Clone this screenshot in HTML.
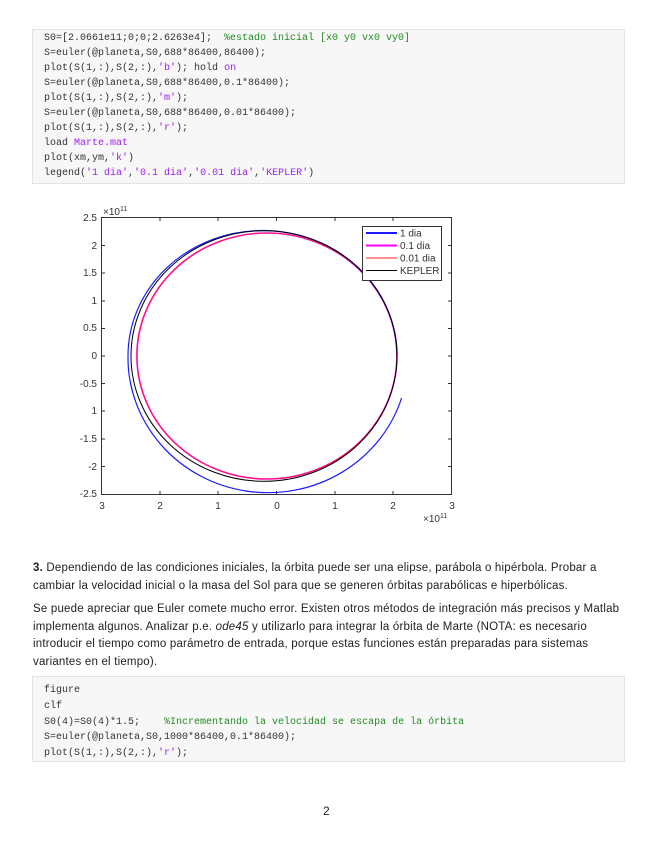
<!DOCTYPE html>
<html><head><meta charset="utf-8"><style>
body{margin:0;width:655px;height:848px;background:#fff;position:relative;overflow:hidden;font-family:"Liberation Sans",sans-serif;color:#222}
.code{position:absolute;left:32px;width:593px;background:#f7f7f7;border:1px solid #e3e3e3;font-family:"Liberation Mono",monospace;font-size:10px;line-height:15px;color:#333;white-space:pre;box-sizing:border-box;padding-left:11px}
.s{color:#a020f0}.c{color:#228b22}
.p{position:absolute;left:33px;width:620px;font-size:11.5px;line-height:17.5px;letter-spacing:0.2px;white-space:nowrap}
</style></head><body>
<div class="code" style="top:29px;height:155px;padding-top:1px">S0=[2.0661e11;0;0;2.6263e4];  <span class="c">%estado inicial [x0 y0 vx0 vy0]</span>
S=euler(@planeta,S0,688*86400,86400);
plot(S(1,:),S(2,:),<span class="s">'b'</span>); hold <span class="s">on</span>
S=euler(@planeta,S0,688*86400,0.1*86400);
plot(S(1,:),S(2,:),<span class="s">'m'</span>);
S=euler(@planeta,S0,688*86400,0.01*86400);
plot(S(1,:),S(2,:),<span class="s">'r'</span>);
load <span class="s">Marte.mat</span>
plot(xm,ym,<span class="s">'k'</span>)
legend(<span class="s">'1 dia'</span>,<span class="s">'0.1 dia'</span>,<span class="s">'0.01 dia'</span>,<span class="s">'KEPLER'</span>)</div>

<svg style="position:absolute;left:0;top:0" width="655" height="540" font-family="Liberation Sans,sans-serif" font-size="10" fill="#333">
<rect x="101.5" y="217.5" width="350" height="277" fill="#fff" stroke="#333"/>
<g stroke="#333" stroke-width="1">
<line x1="101.5" y1="245.5" x2="105" y2="245.5"/><line x1="101.5" y1="301" x2="105" y2="301"/><line x1="101.5" y1="356" x2="105" y2="356"/><line x1="101.5" y1="411" x2="105" y2="411"/><line x1="101.5" y1="466.5" x2="105" y2="466.5"/>
<line x1="101.5" y1="273" x2="105" y2="273"/><line x1="101.5" y1="328.5" x2="105" y2="328.5"/><line x1="101.5" y1="383.5" x2="105" y2="383.5"/><line x1="101.5" y1="439" x2="105" y2="439"/>
<line x1="448" y1="245.5" x2="451.5" y2="245.5"/><line x1="448" y1="301" x2="451.5" y2="301"/><line x1="448" y1="356" x2="451.5" y2="356"/><line x1="448" y1="411" x2="451.5" y2="411"/><line x1="448" y1="466.5" x2="451.5" y2="466.5"/>
<line x1="448" y1="273" x2="451.5" y2="273"/><line x1="448" y1="328.5" x2="451.5" y2="328.5"/><line x1="448" y1="383.5" x2="451.5" y2="383.5"/><line x1="448" y1="439" x2="451.5" y2="439"/>
<line x1="160" y1="494.5" x2="160" y2="491"/><line x1="218" y1="494.5" x2="218" y2="491"/><line x1="276.5" y1="494.5" x2="276.5" y2="491"/><line x1="335" y1="494.5" x2="335" y2="491"/><line x1="393" y1="494.5" x2="393" y2="491"/>
<line x1="160" y1="217.5" x2="160" y2="221"/><line x1="218" y1="217.5" x2="218" y2="221"/><line x1="276.5" y1="217.5" x2="276.5" y2="221"/><line x1="335" y1="217.5" x2="335" y2="221"/><line x1="393" y1="217.5" x2="393" y2="221"/>
</g>
<g text-anchor="end">
<text x="97" y="221">2.5</text><text x="97" y="249">2</text><text x="97" y="276">1.5</text><text x="97" y="304">1</text><text x="97" y="331">0.5</text><text x="97" y="359">0</text><text x="97" y="387">-0.5</text><text x="97" y="414">1</text><text x="97" y="442">-1.5</text><text x="97" y="470">-2</text><text x="97" y="497">-2.5</text>
</g>
<g text-anchor="middle">
<text x="102" y="509">3</text><text x="160" y="509">2</text><text x="218" y="509">1</text><text x="277" y="509">0</text><text x="335" y="509">1</text><text x="393" y="509">2</text><text x="452" y="509">3</text>
</g>
<text x="103" y="215">×10<tspan font-size="7" dy="-4">11</tspan></text>
<text x="423" y="522">×10<tspan font-size="7" dy="-4">11</tspan></text>
<ellipse cx="266.9" cy="356" rx="130" ry="123" fill="none" stroke="#ff00ff" stroke-width="1.6"/>
<ellipse cx="266.9" cy="356" rx="130" ry="123" fill="none" stroke="#ff2020" stroke-width="0.8"/>
<path d="M397 356 A134.5 125.5 0 0 0 128 356 A140 135 0 0 0 401.6 398" fill="none" stroke="#1a1aff" stroke-width="1.2"/>
<ellipse cx="264" cy="356" rx="133" ry="125.3" fill="none" stroke="#000" stroke-width="1"/>
<rect x="362.5" y="226.5" width="79" height="54" fill="#fff" stroke="#333"/>
<line x1="366" y1="233" x2="397" y2="233" stroke="#1a1aff" stroke-width="2"/>
<line x1="366" y1="245.5" x2="397" y2="245.5" stroke="#ff00ff" stroke-width="2"/>
<line x1="366" y1="258" x2="397" y2="258" stroke="#ff2020" stroke-width="1"/>
<line x1="366" y1="270.5" x2="397" y2="270.5" stroke="#000" stroke-width="1"/>
<text x="400" y="236.5">1 dia</text><text x="400" y="249">0.1 dia</text><text x="400" y="261.5">0.01 dia</text><text x="400" y="274">KEPLER</text>
</svg>

<div class="p" style="top:560px"><b>3.</b> Dependiendo de las condiciones iniciales, la órbita puede ser una elipse, parábola o hipérbola. Probar a<br>cambiar la velocidad inicial o la masa del Sol para que se generen órbitas parabólicas e hiperbólicas.</div>
<div class="p" style="top:601px">Se puede apreciar que Euler comete mucho error. Existen otros métodos de integración más precisos y Matlab<br>implementa algunos. Analizar p.e. <i>ode45</i> y utilizarlo para integrar la órbita de Marte (NOTA: es necesario<br>introducir el tiempo como parámetro de entrada, porque estas funciones están preparadas para sistemas<br>variantes en el tiempo).</div>

<div class="code" style="top:676px;height:86px;padding-top:6px;line-height:15.8px">figure
clf
S0(4)=S0(4)*1.5;    <span class="c">%Incrementando la velocidad se escapa de la órbita</span>
S=euler(@planeta,S0,1000*86400,0.1*86400);
plot(S(1,:),S(2,:),<span class="s">'r'</span>);</div>

<div style="position:absolute;left:323px;top:804px;font-size:12px">2</div>
</body></html>
